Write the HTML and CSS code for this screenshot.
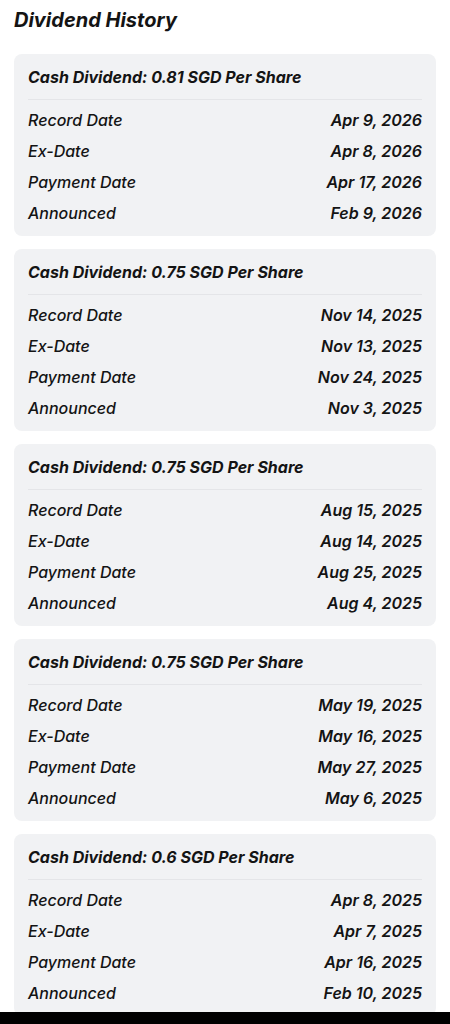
FILE: index.html
```html
<!DOCTYPE html>
<html lang="en">
<head>
    <meta charset="UTF-8">
    <meta name="viewport" content="width=device-width, initial-scale=1.0">
    <title>Dividend History</title>
    <link rel="stylesheet" href="styles.css">
</head>
<body>

    <h1 class="page-title">Dividend History</h1>

    <div class="list">
        <div class="card">
            <div class="card-title">Cash Dividend: 0.81 SGD Per Share</div>
            <div class="rows">
                <div class="row"><span class="label">Record Date</span><span class="value">Apr 9, 2026</span></div>
                <div class="row"><span class="label">Ex-Date</span><span class="value">Apr 8, 2026</span></div>
                <div class="row"><span class="label">Payment Date</span><span class="value">Apr 17, 2026</span></div>
                <div class="row"><span class="label">Announced</span><span class="value">Feb 9, 2026</span></div>
            </div>
        </div>

        <div class="card">
            <div class="card-title">Cash Dividend: 0.75 SGD Per Share</div>
            <div class="rows">
                <div class="row"><span class="label">Record Date</span><span class="value">Nov 14, 2025</span></div>
                <div class="row"><span class="label">Ex-Date</span><span class="value">Nov 13, 2025</span></div>
                <div class="row"><span class="label">Payment Date</span><span class="value">Nov 24, 2025</span></div>
                <div class="row"><span class="label">Announced</span><span class="value">Nov 3, 2025</span></div>
            </div>
        </div>

        <div class="card">
            <div class="card-title">Cash Dividend: 0.75 SGD Per Share</div>
            <div class="rows">
                <div class="row"><span class="label">Record Date</span><span class="value">Aug 15, 2025</span></div>
                <div class="row"><span class="label">Ex-Date</span><span class="value">Aug 14, 2025</span></div>
                <div class="row"><span class="label">Payment Date</span><span class="value">Aug 25, 2025</span></div>
                <div class="row"><span class="label">Announced</span><span class="value">Aug 4, 2025</span></div>
            </div>
        </div>

        <div class="card">
            <div class="card-title">Cash Dividend: 0.75 SGD Per Share</div>
            <div class="rows">
                <div class="row"><span class="label">Record Date</span><span class="value">May 19, 2025</span></div>
                <div class="row"><span class="label">Ex-Date</span><span class="value">May 16, 2025</span></div>
                <div class="row"><span class="label">Payment Date</span><span class="value">May 27, 2025</span></div>
                <div class="row"><span class="label">Announced</span><span class="value">May 6, 2025</span></div>
            </div>
        </div>

        <div class="card">
            <div class="card-title">Cash Dividend: 0.6 SGD Per Share</div>
            <div class="rows">
                <div class="row"><span class="label">Record Date</span><span class="value">Apr 8, 2025</span></div>
                <div class="row"><span class="label">Ex-Date</span><span class="value">Apr 7, 2025</span></div>
                <div class="row"><span class="label">Payment Date</span><span class="value">Apr 16, 2025</span></div>
                <div class="row"><span class="label">Announced</span><span class="value">Feb 10, 2025</span></div>
            </div>
        </div>
    </div>

    <div class="nav-bar"></div>

</body>
</html>
```

FILE: styles.css
```css
body {
    margin: 0;
    padding: 0 14px;
    font-family: Inter, "Open Sans", sans-serif;
    font-style: italic;
    color: #141414;
    background: #ffffff;
}
.page-title {
    margin: 0;
    padding: 7px 0 0 0;
    height: 54px;
    box-sizing: border-box;
    font-size: 20px;
    line-height: 26px;
    font-weight: 700;
}
.list {
    display: flex;
    flex-direction: column;
    gap: 13px;
}
.card {
    background: #f1f2f4;
    border-radius: 8px;
    padding: 0 14px;
}
.card-title {
    height: 45px;
    line-height: 46px;
    font-size: 16px;
    font-weight: 700;
    border-bottom: 1px solid #e4e5e8;
}
.rows {
    padding: 4px 0 8px 0;
}
.row {
    display: flex;
    justify-content: space-between;
    align-items: center;
    height: 31px;
    font-size: 16px;
}
.label {
    font-weight: 500;
}
.value {
    font-weight: 600;
}
.nav-bar {
    position: fixed;
    left: 0;
    right: 0;
    bottom: 0;
    height: 12px;
    background: #000000;
}
```
